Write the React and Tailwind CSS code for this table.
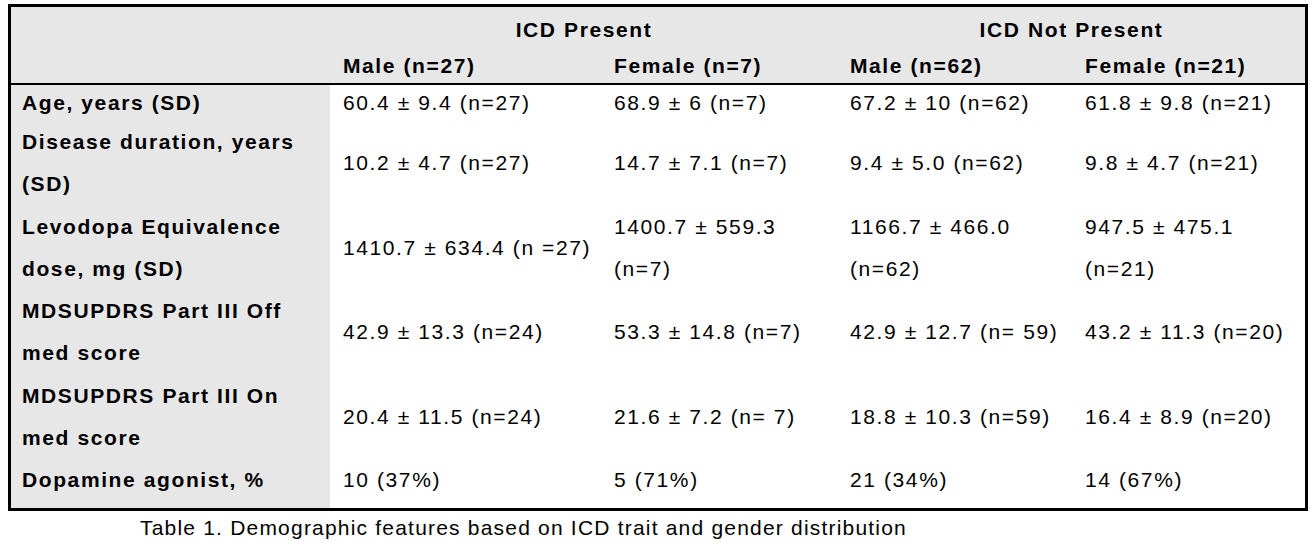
const COLS = "grid grid-cols-[319px_272px_236px_235px_1fr]";

// each line of a cell is its own entry, the table breaks lines by hand
const rows = [
  {
    label: ["Age, years (SD)"],
    vals: [["60.4 ± 9.4 (n=27)"], ["68.9 ± 6 (n=7)"], ["67.2 ± 10 (n=62)"], ["61.8 ± 9.8 (n=21)"]],
  },
  {
    label: ["Disease duration, years", "(SD)"],
    vals: [["10.2 ± 4.7 (n=27)"], ["14.7 ± 7.1 (n=7)"], ["9.4 ± 5.0 (n=62)"], ["9.8 ± 4.7 (n=21)"]],
  },
  {
    label: ["Levodopa Equivalence", "dose, mg (SD)"],
    vals: [
      ["1410.7 ± 634.4 (n =27)"],
      ["1400.7 ± 559.3", "(n=7)"],
      ["1166.7 ± 466.0", "(n=62)"],
      ["947.5 ± 475.1", "(n=21)"],
    ],
  },
  {
    label: ["MDSUPDRS Part III Off", "med score"],
    vals: [["42.9 ± 13.3 (n=24)"], ["53.3 ± 14.8 (n=7)"], ["42.9 ± 12.7 (n= 59)"], ["43.2 ± 11.3 (n=20)"]],
  },
  {
    label: ["MDSUPDRS Part III On", "med score"],
    vals: [["20.4 ± 11.5 (n=24)"], ["21.6 ± 7.2 (n= 7)"], ["18.8 ± 10.3 (n=59)"], ["16.4 ± 8.9 (n=20)"]],
  },
  {
    label: ["Dopamine agonist, %"],
    vals: [["10 (37%)"], ["5 (71%)"], ["21 (34%)"], ["14 (67%)"]],
  },
];

const Row = ({ row, first, last }) => {
  const lead = first ? "leading-[36px]" : "leading-[42.25px]";
  const pad = last ? "pb-[7px]" : "";
  return (
    <>
      <div className={`bg-[#e7e7e7] pl-[11px] font-bold ${lead} ${pad}`}>
        {row.label.map((l) => (
          <div key={l} className="whitespace-nowrap">{l}</div>
        ))}
      </div>
      {row.vals.map((v, i) => (
        <div
          key={i}
          className={`flex flex-col justify-center ${i === 0 ? "pl-[13px]" : "pl-[12px]"} ${lead} ${pad}`}
        >
          {v.map((l) => (
            <div key={l} className="whitespace-nowrap">{l}</div>
          ))}
        </div>
      ))}
    </>
  );
};

const App = () => {
  return (
    <div className="w-[1316px] h-[546px] bg-white text-black text-[21px] tracking-[1.6px] font-['Liberation_Sans',Arial,sans-serif] pt-[4px] pl-[8px]">
      <div className="w-[1300px] border-[3px] border-black">
        {/* header */}
        <div className="bg-[#e7e7e7] border-b-2 border-black pt-[3px] pb-[1px] font-bold">
          <div className={`${COLS} leading-[40px]`}>
            <div />
            <div className="col-span-2 text-center">ICD Present</div>
            <div className="col-span-2 text-center">ICD Not Present</div>
          </div>
          <div className={`${COLS} leading-[32px]`}>
            <div />
            <div className="pl-[13px] whitespace-nowrap">Male (n=27)</div>
            <div className="pl-[12px] whitespace-nowrap">Female (n=7)</div>
            <div className="pl-[12px] whitespace-nowrap">Male (n=62)</div>
            <div className="pl-[12px] whitespace-nowrap">Female (n=21)</div>
          </div>
        </div>

        {/* body */}
        <div className={COLS}>
          {rows.map((r, i) => (
            <Row key={i} row={r} first={i === 0} last={i === rows.length - 1} />
          ))}
        </div>
      </div>

      <p className="mt-[5px] pl-[132px] leading-[24px] tracking-[1.2px] whitespace-nowrap">
        Table 1. Demographic features based on ICD trait and gender distribution
      </p>
    </div>
  );
};

export default App;
